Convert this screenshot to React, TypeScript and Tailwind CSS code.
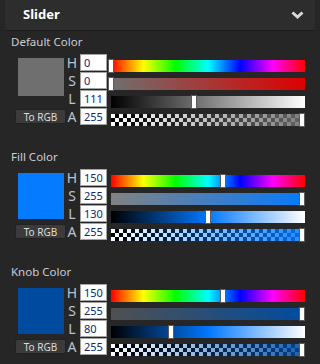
import React from 'react';

type ColorSection = {
  label: string;
  h: number;
  s: number;
  l: number;
  a: number;
  swatchH: number;
};

const SECTIONS: ColorSection[] = [
  { label: 'Default Color', h: 0, s: 0, l: 111, a: 255, swatchH: 38 },
  { label: 'Fill Color', h: 150, s: 255, l: 130, a: 255, swatchH: 46 },
  { label: 'Knob Color', h: 150, s: 255, l: 80, a: 255, swatchH: 46 },
];

const FONT = '"Noto Sans", "Open Sans", sans-serif';

const hsl = (h: number, s: number, l: number, a = 1) =>
  `hsla(${(h / 255) * 360}, ${(s / 255) * 100}%, ${(l / 255) * 100}%, ${a})`;

const CHECKER = 'repeating-conic-gradient(#000 0 25%, #fff 0 50%) 0 0 / 8px 8px';

function Row({ letter, value, track }: { letter: string; value: number; track: string }) {
  return (
    <div className="flex h-[18px] items-start">
      <span className="h-[17px] w-[12px] text-center text-[14px] leading-[17px] text-[#bcc3cd]">{letter}</span>
      <div className="ml-[2px] h-[17px] w-[27px] border border-[#a3a3a3] bg-white pl-[3px] text-[11px] leading-[15px] text-[#0b2a6b]">
        {value}
      </div>
      <div className="relative ml-[1px] h-[18px] w-[197px]">
        <div className="ml-[3px] mt-[6px] h-[12px] w-[194px]" style={{ background: track }} />
        <div
          className="absolute top-[5px] h-[14px] w-[6px] border border-[#5c5c5c] bg-white"
          style={{ left: (value / 255) * 191 }}
        />
      </div>
    </div>
  );
}

function ColorEditor({ section }: { section: ColorSection }) {
  const { h, s, l, a } = section;
  const hue = 'linear-gradient(to right, #f00, #ff0, #0f0, #0ff, #00f, #f0f, #f00)';
  const sat = `linear-gradient(to right, ${hsl(h, 0, l)}, ${hsl(h, 255, l)})`;
  const lum = `linear-gradient(to right, #000, ${hsl(h, s, 127.5)}, #fff)`;
  const alpha = `linear-gradient(to right, ${hsl(h, s, l, 0)}, ${hsl(h, s, l, 0.9)}), ${CHECKER}`;

  return (
    <section className="pl-[11px]">
      <div className="h-[16px] text-[11.5px] leading-[16px] text-[#c9ced6]">{section.label}</div>
      <div className="ml-[4px] mt-[4px] flex">
        <div className="w-[51px]">
          <div
            className="ml-[3px] mt-[4px] w-[46px]"
            style={{ height: section.swatchH, background: hsl(h, s, l) }}
          />
          <button
            className="flex h-[15px] w-[51px] items-center justify-center rounded-[2px] border border-[#222] bg-[#3b3b3b] text-[10px] leading-none text-[#dcdcdc]"
            style={{ marginTop: 55 - 4 - section.swatchH }}
          >
            To RGB
          </button>
        </div>
        <div className="flex flex-col">
          <Row letter="H" value={h} track={hue} />
          <Row letter="S" value={s} track={sat} />
          <Row letter="L" value={l} track={lum} />
          <Row letter="A" value={a} track={alpha} />
        </div>
      </div>
    </section>
  );
}

export default function App() {
  return (
    <div className="h-[364px] w-[320px] overflow-hidden bg-[#262626]" style={{ fontFamily: FONT }}>
      <div className="mx-[5px] flex h-[31px] items-center justify-between border-b border-[#1c1c1c] bg-[#2d2d2d] pl-[18px] pr-[11px]">
        <span className="text-[13px] font-bold text-white">Slider</span>
        <svg width="13" height="8" viewBox="0 0 13 8" fill="none">
          <polyline points="1.5,1.5 6.5,6 11.5,1.5" stroke="#d9d9d9" strokeWidth="3" />
        </svg>
      </div>
      <div className="flex flex-col gap-[23px] pt-[3px]">
        {SECTIONS.map((sec) => (
          <ColorEditor key={sec.label} section={sec} />
        ))}
      </div>
    </div>
  );
}
